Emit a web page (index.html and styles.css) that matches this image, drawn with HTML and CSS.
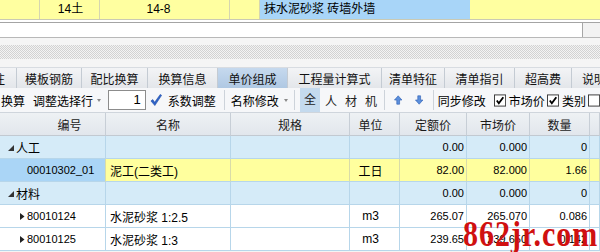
FILE: index.html
```html
<!DOCTYPE html>
<html>
	<head>
		<meta charset="UTF-8">
		<title>单价组成</title>
		<link rel="stylesheet" href="styles.css">
	</head>
	<body>
		<!--上方定额行-->
		<div class="top-row">
			<div class="tc w40"></div>
			<div class="tc w60">14土</div>
			<div class="tc w130 pr">14-8</div>
			<div class="tc w30"></div>
			<div class="tc w210 blue">抹水泥砂浆 砖墙外墙</div>
			<div class="tc rest"></div>
		</div>
		<div class="white-line"></div>
		<div class="edit"><div class="edit-box"></div></div>

		<!--分隔条-->
		<div class="split"><div class="dots"></div></div>

		<!--页签-->
		<div class="tabs">
			<div class="tab cut">备注</div>
			<div class="tab" style="width:65px">模板钢筋</div>
			<div class="tab" style="width:66px">配比换算</div>
			<div class="tab" style="width:70px">换算信息</div>
			<div class="tab on" style="width:70px">单价组成</div>
			<div class="tab" style="width:94px">工程量计算式</div>
			<div class="tab" style="width:63px">清单特征</div>
			<div class="tab" style="width:70px">清单指引</div>
			<div class="tab" style="width:57px">超高费</div>
			<div class="tab last">说明信息</div>
		</div>

		<!--工具条-->
		<div class="toolbar">
			<span class="t-first">换算</span>
			<span class="t-sel">调整选择行</span>
			<span class="caret"></span>
			<div class="num">1</div>
			<svg class="ok" width="13" height="14" viewBox="0 0 13 14">
				<path d="M1 8 L3 6.5 L5 9.5 L11 1 L12.5 2 L5.2 13 Z" fill="#2f63c8" stroke="#1d4aa3" stroke-width="0.6"/>
			</svg>
			<span class="t-coef">系数调整</span>
			<span class="sep s1"></span>
			<span class="t-name">名称修改</span>
			<span class="caret c2"></span>
			<span class="sep s2"></span>
			<span class="fil on">全</span>
			<span class="fil">人</span>
			<span class="fil">材</span>
			<span class="fil">机</span>
			<span class="sep s3"></span>
			<svg class="arr up" width="9" height="10" viewBox="0 0 9 10">
				<path d="M4.5 0.5 L8.5 5 L6 5 L6 9.5 L3 9.5 L3 5 L0.5 5 Z" fill="#5b8fdc" stroke="#3465b8" stroke-width="0.7"/>
			</svg>
			<svg class="arr down" width="9" height="10" viewBox="0 0 9 10">
				<path d="M4.5 9.5 L8.5 5 L6 5 L6 0.5 L3 0.5 L3 5 L0.5 5 Z" fill="#5b8fdc" stroke="#3465b8" stroke-width="0.7"/>
			</svg>
			<span class="sep s4"></span>
			<span class="t-sync">同步修改</span>
			<svg class="cb cb1" width="13" height="13" viewBox="0 0 13 13">
				<rect x="0.5" y="0.5" width="12" height="12" fill="#fff" stroke="#333"/>
				<path d="M3 6.5 L5.2 9.5 L10 3" fill="none" stroke="#000" stroke-width="2"/>
			</svg>
			<span class="t-lbl">市场价</span>
			<svg class="cb" width="13" height="13" viewBox="0 0 13 13">
				<rect x="0.5" y="0.5" width="12" height="12" fill="#fff" stroke="#333"/>
				<path d="M3 6.5 L5.2 9.5 L10 3" fill="none" stroke="#000" stroke-width="2"/>
			</svg>
			<span class="t-lbl">类别</span>
			<svg class="cb" width="13" height="13" viewBox="0 0 13 13">
				<rect x="0.5" y="0.5" width="12" height="12" fill="#fff" stroke="#333"/>
			</svg>
		</div>

		<!--表格-->
		<div class="grid">
			<div class="row head">
				<div class="c code-h">编号</div>
				<div class="c mid">名称</div>
				<div class="c mid">规格</div>
				<div class="c mid unit">单位</div>
				<div class="c mid">定额价</div>
				<div class="c mid">市场价</div>
				<div class="c mid">数量</div>
				<div class="c"></div>
			</div>
			<div class="row group">
				<div class="c"><svg class="open" width="6" height="6" viewBox="0 0 6 6"><path d="M6 0 L6 6 L0 6 Z" fill="#333"/></svg>人工</div>
				<div class="c"></div>
				<div class="c"></div>
				<div class="c"></div>
				<div class="c num-c">0.00</div>
				<div class="c num-c">0.000</div>
				<div class="c num-c">0</div>
				<div class="c"></div>
			</div>
			<div class="row cur">
				<div class="c code sel">00010302_01</div>
				<div class="c name">泥工(二类工)</div>
				<div class="c"></div>
				<div class="c mid unit">工日</div>
				<div class="c num-c">82.00</div>
				<div class="c num-c">82.000</div>
				<div class="c num-c">1.66</div>
				<div class="c"></div>
			</div>
			<div class="row group">
				<div class="c"><svg class="open" width="6" height="6" viewBox="0 0 6 6"><path d="M6 0 L6 6 L0 6 Z" fill="#333"/></svg>材料</div>
				<div class="c"></div>
				<div class="c"></div>
				<div class="c"></div>
				<div class="c num-c">0.00</div>
				<div class="c num-c">0.000</div>
				<div class="c num-c">0</div>
				<div class="c"></div>
			</div>
			<div class="row">
				<div class="c code"><svg class="fold" width="5" height="7" viewBox="0 0 5 7"><path d="M0 0 L4.5 3.5 L0 7 Z" fill="#222"/></svg>80010124</div>
				<div class="c name">水泥砂浆 1:2.5</div>
				<div class="c"></div>
				<div class="c mid unit">m3</div>
				<div class="c num-c">265.07</div>
				<div class="c num-c">265.070</div>
				<div class="c num-c">0.086</div>
				<div class="c"></div>
			</div>
			<div class="row">
				<div class="c code"><svg class="fold" width="5" height="7" viewBox="0 0 5 7"><path d="M0 0 L4.5 3.5 L0 7 Z" fill="#222"/></svg>80010125</div>
				<div class="c name">水泥砂浆 1:3</div>
				<div class="c"></div>
				<div class="c mid unit">m3</div>
				<div class="c num-c">239.65</div>
				<div class="c num-c">239.650</div>
				<div class="c num-c">0.142</div>
				<div class="c"></div>
			</div>
		</div>

		<!--水印-->
		<div class="mark">862jr.com</div>
	</body>
</html>
```

FILE: styles.css
```css
*{
	margin: 0px;
	padding: 0px;
}

body{
	width: 600px;
	height: 252px;
	overflow: hidden;
	position: relative;
	background-color: #f4f4f4;
	font-family: "Liberation Sans", "Noto Sans CJK SC", sans-serif;
	font-size: 12px;
	color: #000;
}

/*上方定额行*/
.top-row{
	display: flex;
	height: 20px;
	background-color: #ffffa0;
	border-bottom: 1px solid #cacab4;
	box-sizing: border-box;
}
.tc{
	height: 19px;
	line-height: 19px;
	text-align: center;
	border-right: 1px solid #d6d6b0;
	box-sizing: border-box;
}
.w40{ width: 40px; }
.w60{ width: 60px; padding-left: 2px; }
.w130{ width: 130px; }
.pr{ padding-right: 12px; }
.w30{ width: 30px; }
.w210{
	width: 210px;
	text-align: left;
	padding-left: 4px;
	border-right: none;
}
.blue{ background-color: #a8d5f8; }
.rest{ flex: 1; border-right: none; }

.white-line{
	height: 2px;
	background-color: #fff;
}

.edit{
	height: 16px;
	display: flex;
	border-top: 1px solid #a4a4a4;
	border-bottom: 1px solid #b8b8b8;
	box-sizing: border-box;
	background-color: #f2f2f2;
}
.edit-box{
	width: 582px;
	background-color: #fff;
	border-right: 1px solid #a6a6a6;
}

/*分隔条*/
.split{
	height: 29px;
	padding: 7px 0px 8px 0px;
	box-sizing: border-box;
	background-color: #f5f5f5;
}
.dots{
	height: 14px;
	background: repeating-conic-gradient(#d2d2d2 0 25%, #f3f3f3 0 50%) 0 0 / 2px 2px;
}

/*页签*/
.tabs{
	display: flex;
	height: 21px;
	background: linear-gradient(#f3f4f6, #e3e6ea);
	border-top: 1px solid #d8dce1;
	box-sizing: border-box;
}
.tab{
	display: flex;
	align-items: center;
	justify-content: center;
	height: 20px;
	border-right: 1px solid #c4cbd3;
	box-sizing: border-box;
	white-space: nowrap;
	overflow: hidden;
	font-size: 12px;
	color: #111;
}
.tab.cut{
	width: 17px;
	justify-content: flex-end;
	padding-right: 11px;
}
.tab.on{
	background: linear-gradient(#c6d9ee, #afc8e3);
}
.tab.last{
	flex: 1;
	justify-content: flex-start;
	padding-left: 10px;
	border-right: none;
}

/*工具条*/
.toolbar{
	display: flex;
	align-items: center;
	height: 25px;
	background-color: #f6f7f9;
	border-bottom: 1px solid #cfd5dc;
	box-sizing: border-box;
	white-space: nowrap;
}
.t-first{ margin-left: 1px; }
.t-sel{ margin-left: 8px; }
.caret{
	width: 0px;
	height: 0px;
	margin-left: 4px;
	border-left: 2px solid transparent;
	border-right: 2px solid transparent;
	border-top: 3px solid #8a8a8a;
}
.num{
	width: 40px;
	height: 20px;
	margin-left: 7px;
	border: 1px solid #8c8c8c;
	box-sizing: border-box;
	background-color: #fff;
	text-align: right;
	padding-right: 4px;
	line-height: 18px;
	font-size: 13px;
}
.ok{ margin-left: 4px; }
.t-coef{ margin-left: 6px; }
.sep{
	width: 1px;
	height: 20px;
	background-color: #cdd3da;
}
.s1{ margin-left: 8px; }
.t-name{ margin-left: 6px; }
.c2{ margin-left: 5px; }
.s2{ margin-left: 6px; }
.fil{
	width: 12px;
	margin-left: 8px;
	text-align: center;
	color: #222;
}
.fil.on{
	width: 22px;
	height: 24px;
	line-height: 24px;
	margin-left: 5px;
	margin-right: -3px;
	background-color: #c4daee;
}
.s3{ margin-left: 7px; }
.arr.up{ margin-left: 9px; }
.arr.down{ margin-left: 13px; }
.s4{ margin-left: 9px; }
.t-sync{ margin-left: 4px; }
.cb{ margin-left: 2px; }
.cb1{ margin-left: 8px; }
.t-lbl{ margin-left: 3px; }

/*表格*/
.row{
	display: grid;
	grid-template-columns: 106px 125px 119px 50px 67px 63px 60px 10px;
	height: 23px;
	background-color: #fff;
}
.c{
	display: flex;
	align-items: center;
	border-right: 1px solid #b7d6ea;
	border-bottom: 1px solid #b7d6ea;
	box-sizing: border-box;
	white-space: nowrap;
	overflow: hidden;
}
.head{
	background: linear-gradient(#eef1f4, #e1e6ec);
}
.head .c{
	border-right-color: #c7ced6;
	border-bottom-color: #c2c9d1;
	color: #1a1a1a;
}
.mid{ justify-content: center; }
.unit{ padding-right: 8px; }
.code-h{
	justify-content: center;
	padding-left: 34px;
}
.group{
	background-color: #d5ebf8;
}
.group .c:first-child{
	padding-left: 8px;
}
.open{
	margin-right: 2px;
	margin-top: 2px;
}
.cur{
	background-color: #ffff9e;
}
.cur .c{
	border-right-color: #d9dca8;
	border-bottom-color: #b7d6ea;
}
.sel{
	background-color: #aad5f6;
}
.code{
	padding-left: 27px;
	font-size: 11px;
}
.fold{
	margin-left: -7px;
	margin-right: 2px;
}
.name{
	padding-left: 4px;
}
.num-c{
	justify-content: flex-end;
	padding-right: 2px;
	font-size: 11px;
}

/*水印*/
.mark{
	position: absolute;
	left: 463px;
	top: 222px;
	font-family: "Liberation Serif", serif;
	font-weight: bold;
	font-size: 30px;
	line-height: 30px;
	letter-spacing: 1px;
	color: #d01010;
	transform: scaleY(1.2);
	transform-origin: left bottom;
}
```
